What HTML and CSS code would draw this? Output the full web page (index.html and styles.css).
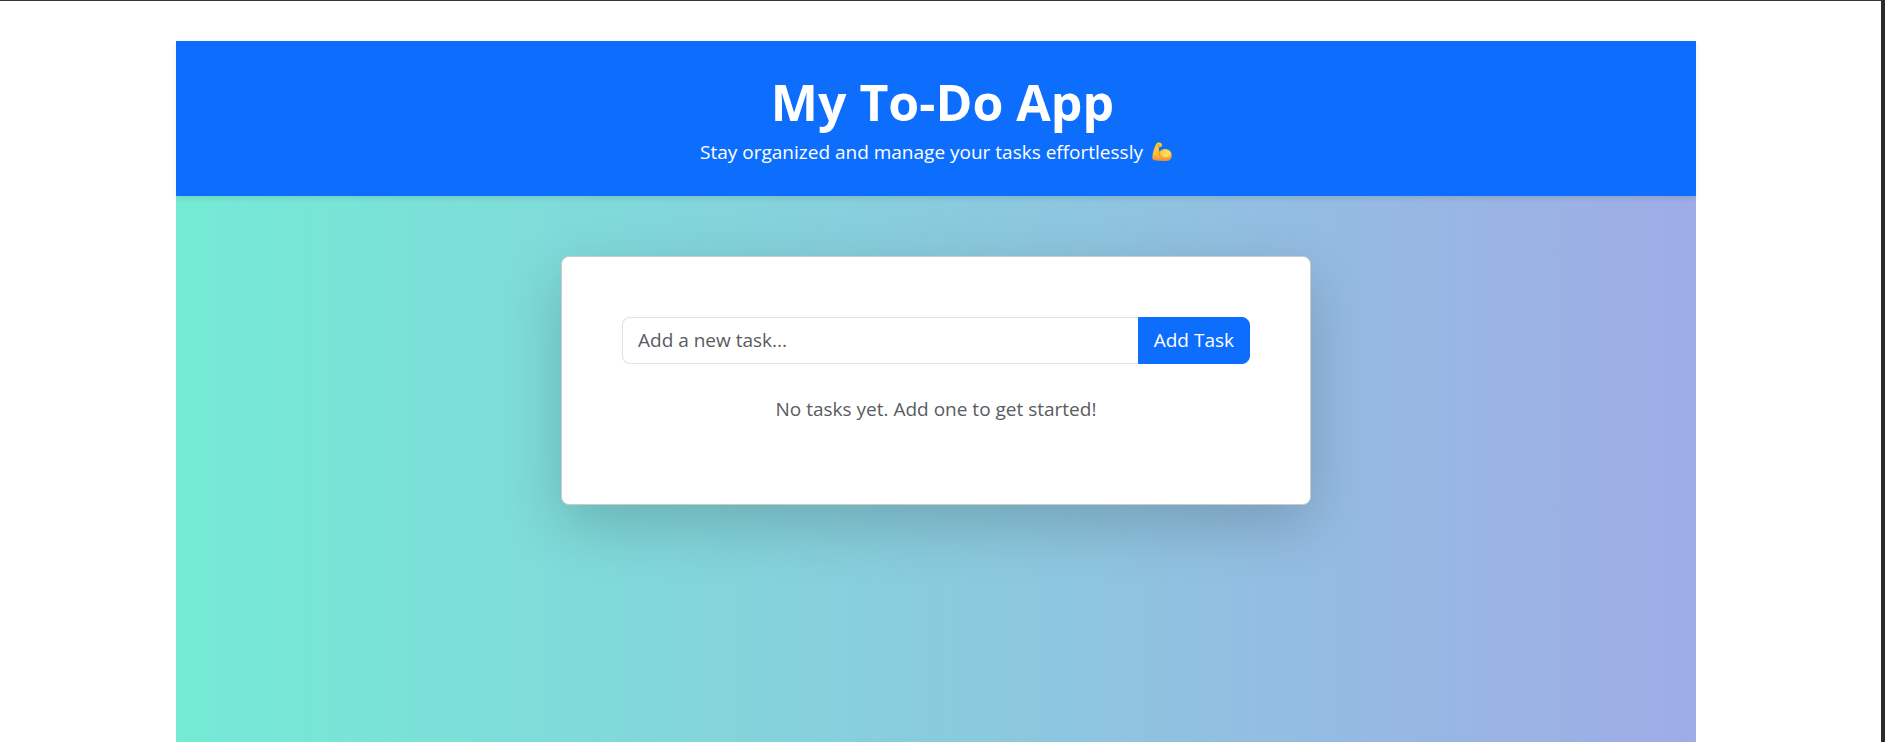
FILE: index.html
```html
<!DOCTYPE html>
<html lang="en">
<head>
<meta charset="utf-8">
<meta name="viewport" content="width=device-width, initial-scale=1">
<title>My To-Do App</title>
<link rel="stylesheet" href="styles.css">
</head>
<body>
<div class="app">
  <header class="app-header">
    <h1 class="app-title">&nbsp;My To-Do App</h1>
    <p class="app-tagline">Stay organized and manage your tasks effortlessly
      <svg class="muscle" viewBox="0 0 20 20" role="img" aria-label="Flexed arm">
        <defs>
          <linearGradient id="skin" x1="0" y1="0" x2="0" y2="1">
            <stop offset="0" stop-color="#ffcf2e"/>
            <stop offset="0.6" stop-color="#ffc23c"/>
            <stop offset="1" stop-color="#f08a3c"/>
          </linearGradient>
        </defs>
        <path fill="url(#skin)" d="M4.400 1.800C5 .7 6.500.3 8 .7c1.200.3 2 1.200 2 2.300 0 1.200-.6 2-1.700 2.100-.6.1-1 0-1.400-.2-.2 1.600 0 3.300.6 5C8.800 8 10.600 7 13 7c3.700 0 6.500 2.400 6.700 5.800.2 2.500-.7 4.500-2.300 5.400-1 .6-2.700.8-7.400.8-4.500 0-7-.1-8.300-.9C.5 17.400.2 16.200.4 14.500.8 10.500 2.300 5.600 4.400 1.800Z"/>
        <path fill="#ffdc55" d="M10 11.500c.6-2 2-3.200 4-3.200 2.400 0 4.200 1.500 4.200 3.500s-1.800 3.400-4.200 3.400-4-1.400-4-3.700Z"/>
        <path fill="none" stroke="#e88a1c" stroke-width=".9" stroke-linecap="round" d="M7.500 9.900c-.5 1.200-.4 2.500.2 3.600M5.800 3.200c.8-.5 1.700-.4 2.300.2M6.900 4.900c-.6-.2-.9-.5-1-.9"/>
      </svg>
    </p>
  </header>
  <main class="app-body">
    <section class="card">
      <form class="task-form">
        <input class="task-input" type="text" placeholder="Add a new task..." aria-label="Add a new task">
        <button class="task-button" type="button">Add Task</button>
      </form>
      <p class="empty-note">No tasks yet. Add one to get started!</p>
    </section>
  </main>
</div>
</body>
</html>
```
FILE: styles.css
```css
* {
  box-sizing: border-box;
}

body {
  margin: 0;
  min-height: 100vh;
  display: flex;
  flex-direction: column;
  padding: 40px 9px 0 0;
  border-top: 1px solid #353535;
  border-right: 4px solid #2b2b2b;
  background: #fff;
  font-family: "Open Sans", "Noto Sans", sans-serif;
  font-size: 19px;
  line-height: 30px;
  color: #212529;
}

.app {
  flex: 1;
  display: flex;
  flex-direction: column;
  width: 100%;
  max-width: 1520px;
  margin: 0 auto;
  background: linear-gradient(to right, #74ebd5, #9face6);
}

.app-header {
  padding: 31px 30px 29px;
  text-align: center;
  color: #fff;
  background: #0d6efd;
  box-shadow: 0 3px 5px rgba(0, 0, 0, 0.08);
}

.app-title {
  margin: 0 0 5px;
  font-size: 50px;
  line-height: 60px;
  font-weight: 700;
}

.app-tagline {
  margin: 0;
}

.muscle {
  width: 20px;
  height: 20px;
  margin-left: 4px;
  vertical-align: -3px;
}

.app-body {
  padding: 60px 20px;
}

.card {
  max-width: 750px;
  margin: 0 auto;
  padding: 60px;
  border: 1px solid #c8cccc;
  border-radius: 8px;
  background: #fff;
  box-shadow: 0 20px 60px rgba(0, 0, 0, 0.18);
}

.task-form {
  display: flex;
  margin-bottom: 30px;
}

.task-input,
.task-button {
  font: inherit;
  line-height: 29px;
  padding: 8px 15px;
}

.task-input {
  flex: 1;
  min-width: 0;
  border: 1px solid #dee2e6;
  border-right: 0;
  border-radius: 8px 0 0 8px;
  background: #fff;
  color: #212529;
}

.task-input::placeholder {
  color: #595c5f;
  opacity: 1;
}

.task-button {
  border: 1px solid #0d6efd;
  border-radius: 0 8px 8px 0;
  background: #0d6efd;
  color: #fff;
}

.empty-note {
  margin: 0 0 20px;
  text-align: center;
  color: #595c5f;
}
```
